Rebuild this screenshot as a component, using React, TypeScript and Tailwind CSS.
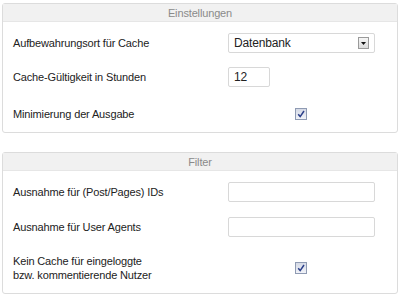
import React from "react";

function Check() {
  return (
    <div className="w-[12px] h-[12px] border border-[#8f9bb3] bg-gradient-to-b from-[#d5dae6] to-[#f1f3f8] flex items-center justify-center">
      <svg width="8" height="8" viewBox="0 0 8 8">
        <path d="M1.2 4.2 L3.2 6.6 L7 1" fill="none" stroke="#2b3f8a" strokeWidth="1.5" />
      </svg>
    </div>
  );
}

function Panel({ title, children, h }: { title: string; children: React.ReactNode; h: string }) {
  return (
    <div className={`border border-[#dcdcdc] rounded-[3px] bg-white ${h} flex flex-col`}>
      <div className="h-[18px] bg-[#f1f1f1] text-[#8a8a8a] text-[11px] leading-[18px] text-center border-b border-[#e6e6e6]">
        {title}
      </div>
      {children}
    </div>
  );
}

export default function App() {
  return (
    <div
      className="w-[400px] h-[296px] bg-white px-[2px] pt-[3px] text-[11px] tracking-[-0.15px] text-[#222]"
      style={{ fontFamily: '"Liberation Sans", Arial, sans-serif' }}
    >
      <Panel title="Einstellungen" h="h-[130px]">
        <div className="flex items-center h-[20px] mt-[11px]">
          <div className="w-[225px] pl-[10px]">Aufbewahrungsort für Cache</div>
          <div className="w-[147px] h-[20px] border border-[#d8d8d8] rounded-[2px] flex items-center justify-between pl-[5px] pr-[5px] text-[12px]">
            <span>Datenbank</span>
            <div className="w-[11px] h-[12px] border border-[#9a9a9a] bg-gradient-to-b from-[#f6f6f6] to-[#dcdcdc] flex items-center justify-center">
              <svg width="5" height="3" viewBox="0 0 5 3"><path d="M0 0 L5 0 L2.5 3 Z" fill="#111" /></svg>
            </div>
          </div>
        </div>
        <div className="flex items-center h-[20px] mt-[14px]">
          <div className="w-[225px] pl-[10px]">Cache-Gültigkeit in Stunden</div>
          <div className="w-[42px] h-[20px] border border-[#d8d8d8] rounded-[2px] flex items-center pl-[5px] text-[12px]">12</div>
        </div>
        <div className="flex items-center h-[14px] mt-[20px]">
          <div className="w-[292px] pl-[10px]">Minimierung der Ausgabe</div>
          <Check />
        </div>
      </Panel>
      <div className="h-[19px]" />
      <Panel title="Filter" h="h-[142px]">
        <div className="flex items-center h-[20px] mt-[11px]">
          <div className="w-[225px] pl-[10px]">Ausnahme für (Post/Pages) IDs</div>
          <div className="w-[147px] h-[20px] border border-[#d8d8d8] rounded-[2px]" />
        </div>
        <div className="flex items-center h-[20px] mt-[15px]">
          <div className="w-[225px] pl-[10px]">Ausnahme für User Agents</div>
          <div className="w-[147px] h-[20px] border border-[#d8d8d8] rounded-[2px]" />
        </div>
        <div className="flex items-center mt-[17px]">
          <div className="w-[292px] pl-[10px] leading-[14px]">
            Kein Cache für eingeloggte
            <br />
            bzw. kommentierende Nutzer
          </div>
          <Check />
        </div>
      </Panel>
    </div>
  );
}
